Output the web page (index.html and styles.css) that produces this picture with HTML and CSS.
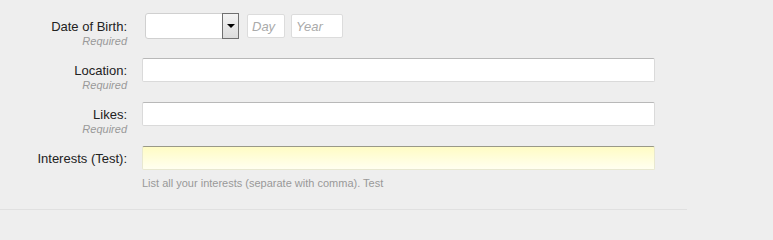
FILE: index.html
```html
<!DOCTYPE html>
<html>
<head>
<meta charset="utf-8">
<link rel="stylesheet" href="styles.css">
</head>
<body>
<form class="form">
  <div class="row row-first">
    <div class="label">
      <div class="label-text">Date of Birth:</div>
      <div class="req">Required</div>
    </div>
    <div class="field field-dob">
      <span class="select"><span class="select-btn"><span class="tri"></span></span></span>
      <input class="small day" type="text" placeholder="Day">
      <input class="small year" type="text" placeholder="Year">
    </div>
  </div>
  <div class="row">
    <div class="label">
      <div class="label-text">Location:</div>
      <div class="req">Required</div>
    </div>
    <div class="field">
      <input class="text" type="text">
    </div>
  </div>
  <div class="row">
    <div class="label">
      <div class="label-text">Likes:</div>
      <div class="req">Required</div>
    </div>
    <div class="field">
      <input class="text" type="text">
    </div>
  </div>
  <div class="row row-last">
    <div class="label">
      <div class="label-text">Interests (Test):</div>
    </div>
    <div class="field">
      <input class="text focus" type="text">
      <div class="help">List all your interests (separate with comma). Test</div>
    </div>
  </div>
</form>
</body>
</html>
```

FILE: styles.css
```css
html, body {
  margin: 0;
  padding: 0;
  background: #eeeeee;
  font-family: "Liberation Sans", Arial, sans-serif;
}

.form {
  width: 687px;
  padding-top: 13px;
  padding-bottom: 19px;
  border-bottom: 1px solid #e0e0e0;
}

.row {
  display: flex;
  align-items: flex-start;
  margin-bottom: 10px;
}

.row-last {
  margin-bottom: 0;
}

.label {
  width: 127px;
  text-align: right;
  margin-top: 5px;
}

.row-first .label {
  margin-top: 6px;
}

.label-text {
  font-size: 13px;
  line-height: 15px;
  color: #222;
}

.req {
  font-size: 11px;
  line-height: 14px;
  font-style: italic;
  color: #999;
}

.field {
  margin-left: 15px;
}

.field-dob {
  display: flex;
  align-items: center;
  margin-left: 18px;
}

.select {
  display: flex;
  justify-content: flex-end;
  box-sizing: border-box;
  width: 94px;
  height: 26px;
  background: #fff;
  border: 1px solid #d0d0d0;
  border-radius: 3px 0 0 3px;
}

.select-btn {
  display: flex;
  align-items: center;
  justify-content: center;
  box-sizing: border-box;
  width: 17px;
  height: 26px;
  margin: -1px -1px -1px 0;
  border: 1px solid #707070;
  background: linear-gradient(#f4f4f4, #dcdcdc);
}

.tri {
  width: 0;
  height: 0;
  border-left: 4px solid transparent;
  border-right: 4px solid transparent;
  border-top: 4px solid #000;
}

.small {
  box-sizing: border-box;
  height: 24px;
  margin: 0;
  padding: 0 4px;
  border: 1px solid #dcdcdc;
  border-radius: 2px;
  background: #fff;
  font-family: "Liberation Sans", Arial, sans-serif;
  font-size: 13px;
  outline: none;
}

.small::placeholder {
  font-style: italic;
  color: #aaa;
}

.day {
  width: 38px;
  margin-left: 8px;
}

.year {
  width: 52px;
  margin-left: 6px;
}

.text {
  display: block;
  box-sizing: border-box;
  width: 513px;
  height: 24px;
  margin: 0;
  padding: 0 4px;
  border: 1px solid #dadada;
  border-top-color: #b8b8b8;
  border-radius: 2px;
  background: #fff;
  font-family: "Liberation Sans", Arial, sans-serif;
  font-size: 13px;
  outline: none;
}

.focus {
  background: linear-gradient(#fffcc4, #fffff0);
  border-color: #e8e8d0;
  border-top-color: #999988;
}

.help {
  margin-top: 6px;
  font-size: 11px;
  line-height: 14px;
  color: #999;
}
```
